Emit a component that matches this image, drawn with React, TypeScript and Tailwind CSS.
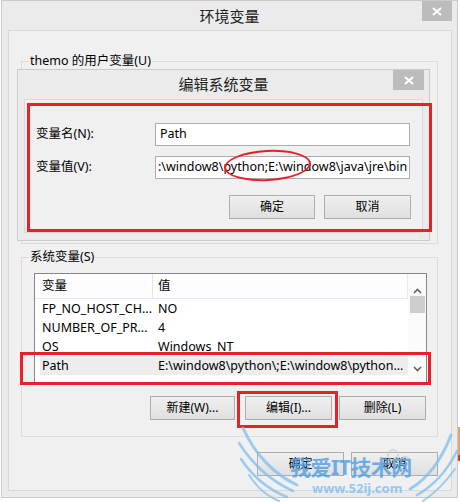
import React from "react";

function CloseBtn({ className }: { className: string }) {
  return (
    <div className={`absolute top-0 flex items-center justify-center bg-[#bcbcbc] ${className}`}>
      <svg width="10" height="9" viewBox="0 0 10 9">
        <path d="M1 1 L9 8 M9 1 L1 8" stroke="#ffffff" strokeWidth="2" />
      </svg>
    </div>
  );
}

function Btn({ label, className = "" }: { label: string; className?: string }) {
  return (
    <div
      className={`h-[24px] flex items-center justify-center border border-[#adadad] bg-gradient-to-b from-[#efefef] to-[#e0e0e0] text-[12px] leading-none text-black ${className}`}
    >
      {label}
    </div>
  );
}

const rows: [string, string][] = [
  ["FP_NO_HOST_CH...", "NO"],
  ["NUMBER_OF_PR...", "4"],
  ["OS", "Windows_NT"],
  ["Path", "E:\\window8\\python\\;E:\\window8\\python..."],
];

export default function App() {
  return (
    <div className="relative w-[460px] h-[502px] bg-white overflow-hidden font-['Noto_Sans','Noto_Sans_CJK_SC',sans-serif] text-[12px] text-black">
      {/* outer window */}
      <div className="ml-[1px] w-[457px] h-[498px] border border-[#cbcbcb] bg-[#ebebeb] flex flex-col">
        <div className="relative h-[29px] shrink-0">
          <div className="text-center text-[15px] leading-[30px] text-[#222]">环境变量</div>
          <CloseBtn className="right-[5px] w-[30px] h-[20px]" />
        </div>
        <div className="ml-[6px] w-[444px] h-[461px] border border-[#d9d9d9] bg-[#f0f0f0] flex flex-col">
          {/* user variables group (mostly hidden) */}
          <fieldset className="ml-[12px] mt-[22px] w-[417px] h-[191px] border border-[#dcdcdc]">
            <legend className="ml-[7px] px-[1px] leading-[16px] text-[12.5px]">themo 的用户变量(U)</legend>
          </fieldset>
          {/* system variables group */}
          <fieldset className="ml-[12px] mt-[5px] w-[417px] border border-[#dcdcdc] flex flex-col">
            <legend className="ml-[7px] px-[1px] leading-[16px] text-[12.5px]">系统变量(S)</legend>
            <div className="ml-[12px] mt-[8px] w-[393px] h-[110px] border border-[#828790] bg-white flex">
              <div className="flex-1 flex flex-col">
                <div className="h-[25px] flex border-b border-r border-[#e2eaf5] bg-[#fdfdfd] text-[12.5px]">
                  <div className="w-[118px] pl-[7px] flex items-center border-r border-[#e5e5e5]">变量</div>
                  <div className="flex-1 pl-[5px] flex items-center">值</div>
                </div>
                {rows.map(([k, v], i) => (
                  <div
                    key={k}
                    className={`h-[19px] flex text-[12.5px] leading-[19px] ${i === 3 ? "ml-[5px] bg-[#ededed]" : ""}`}
                  >
                    <div className={`${i === 3 ? "w-[113px] pl-[2px]" : "w-[118px] pl-[7px]"} whitespace-nowrap overflow-hidden`}>{k}</div>
                    <div className="flex-1 pl-[5px] whitespace-nowrap overflow-hidden">{v}</div>
                  </div>
                ))}
              </div>
              <div className="w-[18px] flex flex-col items-center bg-[#fafafa]">
                <div className="h-[20px] flex items-end justify-center">
                  <svg width="9" height="6" viewBox="0 0 9 6">
                    <path d="M1 5 L4.5 1.5 L8 5" stroke="#606060" strokeWidth="1.6" fill="none" />
                  </svg>
                </div>
                <div className="mt-[2px] w-[15px] h-[17px] bg-[#cdcdcd]" />
                <div className="flex-1" />
                <div className="h-[16px] flex items-start justify-center">
                  <svg width="9" height="6" viewBox="0 0 9 6">
                    <path d="M1 1 L4.5 4.5 L8 1" stroke="#606060" strokeWidth="1.6" fill="none" />
                  </svg>
                </div>
              </div>
            </div>
            <div className="mt-[13px] mb-[16px] mr-[11px] flex justify-end">
              <Btn label="新建(W)..." className="w-[85px]" />
              <Btn label="编辑(I)..." className="ml-[10px] w-[87px]" />
              <Btn label="删除(L)" className="ml-[7px] w-[87px]" />
            </div>
          </fieldset>
          <div className="mt-[15px] mr-[13px] flex justify-end">
            <Btn label="确定" className="w-[87px]" />
            <Btn label="取消" className="ml-[7px] w-[87px]" />
          </div>
        </div>
      </div>

      {/* inner dialog window */}
      <div className="absolute left-[17px] top-[69px] w-[413px] h-[172px] border border-[#cbcbcb] bg-[#ebebeb] flex flex-col">
        <div className="relative h-[29px] shrink-0">
          <div className="text-center text-[15px] leading-[29px] text-[#222]">编辑系统变量</div>
          <CloseBtn className="right-[5px] w-[31px] h-[20px]" />
        </div>
        <div className="ml-[6px] w-[399px] h-[134px] border border-[#d9d9d9] bg-[#f0f0f0] flex flex-col">
          <div className="mt-[23px] flex items-center">
            <div className="ml-[11px] w-[119px] text-[12.5px]">变量名(N):</div>
            <div className="w-[255px] h-[23px] border border-[#abadb3] bg-white flex items-center pl-[4px] text-[12.5px]">Path</div>
          </div>
          <div className="mt-[10px] flex items-center">
            <div className="ml-[11px] w-[119px] text-[12.5px]">变量值(V):</div>
            <div className="w-[255px] h-[23px] border border-[#abadb3] bg-white flex items-center pl-[2px] text-[12.5px] whitespace-nowrap overflow-hidden">
              :\window8\python;E:\window8\java\jre\bin
            </div>
          </div>
          <div className="mt-[16px] mr-[11px] flex justify-end">
            <Btn label="确定" className="w-[86px]" />
            <Btn label="取消" className="ml-[9px] w-[87px]" />
          </div>
        </div>
      </div>

      {/* red annotations */}
      <div className="absolute left-[27px] top-[103px] w-[405px] h-[129px] border-[3px] border-[#e8202a]" />
      <div className="absolute left-[224px] top-[150px] w-[87px] h-[31px] rounded-[50%] border-2 border-[#e8202a] -rotate-3" />
      <div className="absolute left-[20px] top-[352px] w-[411px] h-[33px] border-[3px] border-[#e8202a]" />
      <div className="absolute left-[237px] top-[391px] w-[101px] h-[37px] border-[3px] border-[#e8202a]" />

      {/* right edge background bits */}
      <div className="absolute left-[458px] top-[427px] w-[2px] h-[28px] bg-[#e9a266]" />
      <div className="absolute left-[458px] top-[455px] w-[2px] h-[6px] bg-[#d83a2a]" />

      {/* watermark */}
      <svg className="absolute left-[235px] top-[425px]" width="225" height="77" viewBox="0 0 225 77">
        <g fill="none" stroke="#7dbdf0" strokeOpacity="0.75" strokeLinecap="round">
          <path d="M8 3 C 20 30, 40 50, 62 60" strokeWidth="3" />
          <path d="M4 18 C 18 40, 36 56, 58 66" strokeWidth="2.5" />
          <path d="M6 34 C 18 52, 32 64, 52 72" strokeWidth="2.5" />
          <path d="M14 50 C 22 62, 30 70, 44 76" strokeWidth="2" />
          <path d="M216 10 C 206 36, 192 54, 175 64" strokeWidth="3" />
          <path d="M222 26 C 212 46, 200 60, 182 70" strokeWidth="2.5" />
          <path d="M220 44 C 210 58, 200 68, 188 76" strokeWidth="2" />
        </g>
        <g fill="none" stroke="#c8c8c8" strokeOpacity="0.6" strokeWidth="2">
          <circle cx="158" cy="30" r="5" />
          <circle cx="170" cy="36" r="4" />
        </g>
      </svg>
      <div className="absolute left-[290px] top-[454px] text-[21px] leading-[26px] font-bold text-[#4f9fe3] opacity-80 tracking-[-0.5px] whitespace-nowrap">
        我爱IT技术网
      </div>
      <div className="absolute left-[312px] top-[481px] text-[13px] leading-[14px] font-bold text-[#7fc0ef] opacity-80 whitespace-nowrap">
        www.52ij.com
      </div>
    </div>
  );
}
